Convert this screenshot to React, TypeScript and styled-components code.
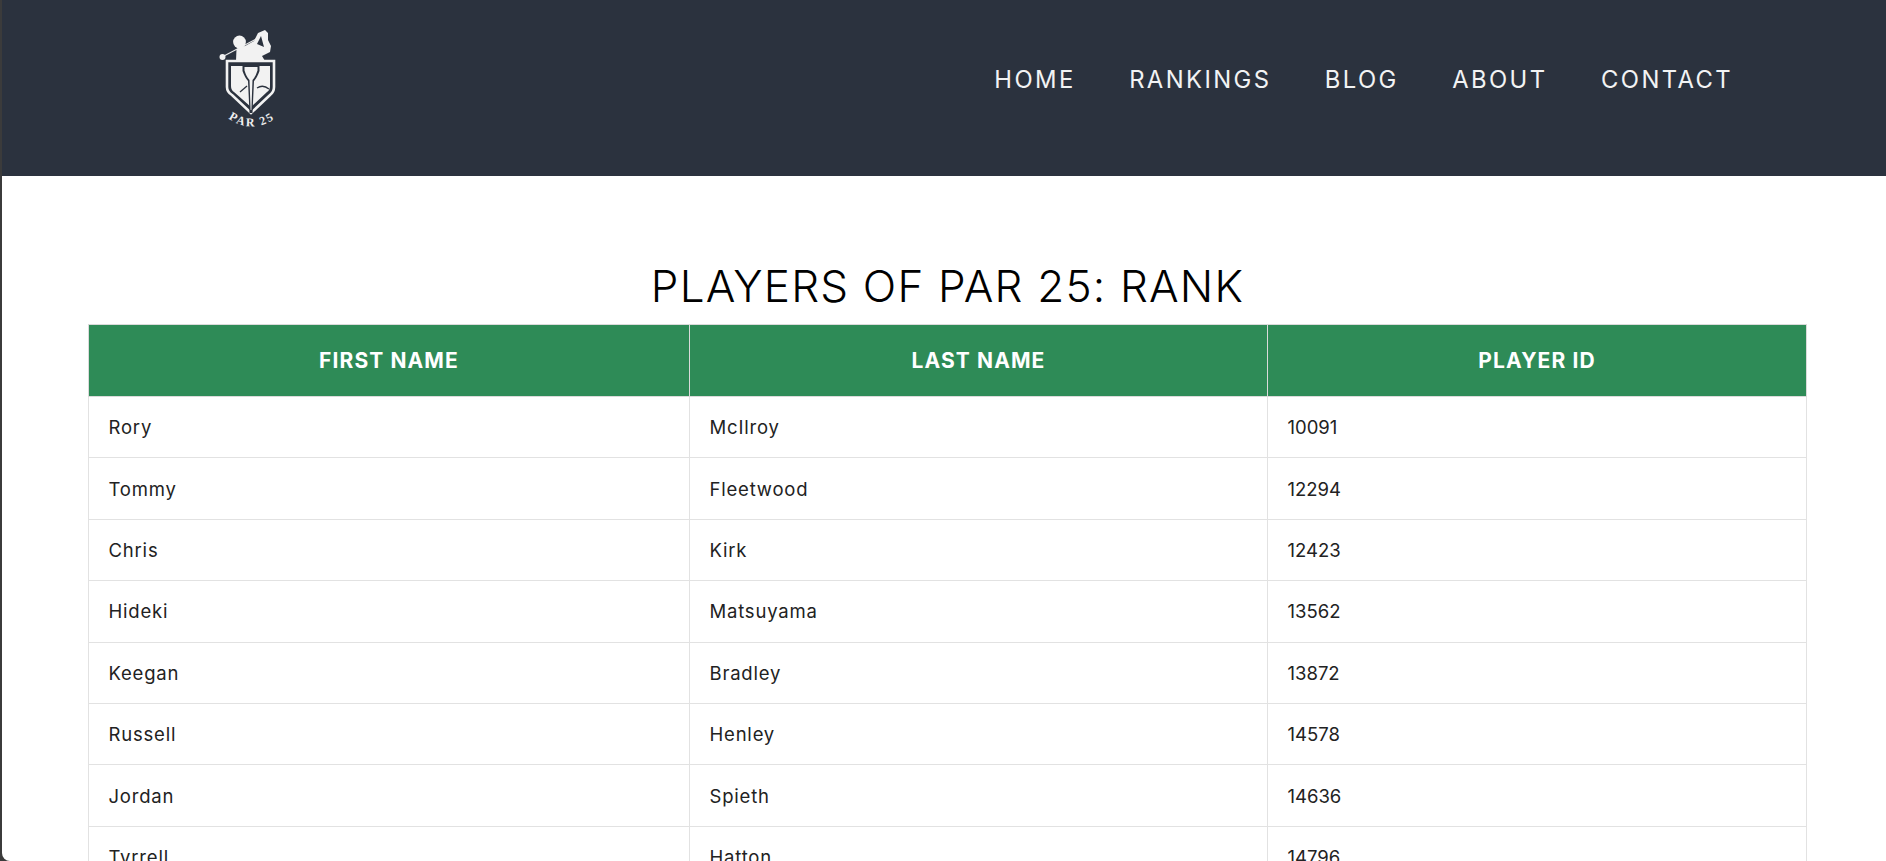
import { createGlobalStyle } from "styled-components";
import styled from "styled-components";

const fontStack = `Inter, "Open Sans", "Liberation Sans", sans-serif`;

const GlobalStyle = createGlobalStyle`
  html, body {
    margin: 0;
    height: 100%;
    overflow: hidden;
    background: #fff;
    font-family: ${fontStack};
  }
`;

const Frame = styled.div`
  height: 861px;
  overflow: hidden;
  background: #3b3b3b;
  padding-left: 2px;
`;

const Header = styled.header`
  height: 176px;
  padding: 28px 153px 0 213px;
  box-sizing: border-box;
  background: #2b323e;
  display: flex;
  justify-content: space-between;
  align-items: flex-start;
`;

const LogoMark = styled.svg`
  width: 70px;
  height: 102px;
  display: block;
`;

const Nav = styled.nav`
  display: flex;
  gap: 53.5px;
  padding-top: 36px;
`;

const NavLink = styled.a`
  font-size: 23.8px;
  line-height: 32px;
  letter-spacing: 2.4px;
  color: #f2f3f4;
  font-weight: 400;
`;

const Main = styled.main`
  height: 685px;
  background: #fff;
  border-bottom-left-radius: 8px;
  padding: 85px 79px 0 86px;
  box-sizing: border-box;
`;

const Title = styled.h1`
  margin: 0 0 13px;
  font-size: 44px;
  line-height: 50px;
  font-weight: 300;
  letter-spacing: 1.2px;
  color: #000;
  text-align: center;
`;

const Table = styled.table`
  width: 1718px;
  table-layout: fixed;
  border-collapse: collapse;
`;

const HeadCell = styled.th`
  height: 71px;
  padding: 0;
  background: #2e8b57;
  color: #fff;
  font-size: 21px;
  font-weight: 700;
  letter-spacing: 1.1px;
  text-align: center;
  border: 1px solid #dadada;
`;

const Cell = styled.td<{ $numeric?: boolean }>`
  height: 61.4px;
  padding: 0 19.5px;
  box-sizing: border-box;
  font-size: 18.5px;
  letter-spacing: ${({ $numeric }) => ($numeric ? "0" : "0.8px")};
  color: #222;
  border: 1px solid #e2e2e2;
`;

const Logo = () => (
  <LogoMark viewBox="215 28 70 102" aria-label="Par 25 logo">
    <defs>
      <path id="crest-arc" d="M225 116 Q252 137 279 116" />
    </defs>
    {/* club */}
    <line x1="222" y1="57" x2="258" y2="38" stroke="#e8e8e8" strokeWidth="1.2" />
    <circle cx="222.5" cy="57" r="3" fill="#f2f2f2" />
    {/* golfer */}
    <circle cx="239.5" cy="42" r="6.4" fill="#f2f2f2" />
    <path
      fillRule="evenodd"
      fill="#f2f2f2"
      d="M236 61 L236.5 49 L246 45.5 L254 41 L258 33 L265 30 L268 33 L268 40 L271 46 L270 52 L262 56 L265 61 Z M257 44 L261 36 L264 47 Z"
    />
    {/* shield */}
    <path
      d="M227 61 H274 V87 Q274 92 270 95 L251 113 L232 95 Q227 92 227 87 Z"
      fill="#2b323e"
      stroke="#f2f2f2"
      strokeWidth="2.6"
    />
    <path d="M231 66 H270 V86 Q270 90 267 92 L251 107 L234 92 Q231 90 231 86 Z" fill="#f2f2f2" />
    {/* tee */}
    <path
      d="M242.5 65 H259.5 V71 Q257 78 254 81 L252.5 113 H249.5 L248 81 Q245 78 242.5 71 Z"
      fill="#2b323e"
    />
    <path
      d="M244.5 67 H257.5 V70.5 Q255.5 77 252.5 80 L251.4 110 H250.6 L249.5 80 Q246.5 77 244.5 70.5 Z"
      fill="#f2f2f2"
    />
    <path d="M257 88 Q263 84 269 89" stroke="#2b323e" strokeWidth="1.3" fill="none" />
    <path d="M240 92 L247 86" stroke="#2b323e" strokeWidth="1.3" fill="none" />
    <text fontFamily='"Liberation Serif", serif' fontSize="12" fontWeight="700" fill="#eee" letterSpacing="2">
      <textPath href="#crest-arc" startOffset="50%" textAnchor="middle">
        PAR 25
      </textPath>
    </text>
  </LogoMark>
);

const links = ["HOME", "RANKINGS", "BLOG", "ABOUT", "CONTACT"];

const players = [
  ["Rory", "McIlroy", "10091"],
  ["Tommy", "Fleetwood", "12294"],
  ["Chris", "Kirk", "12423"],
  ["Hideki", "Matsuyama", "13562"],
  ["Keegan", "Bradley", "13872"],
  ["Russell", "Henley", "14578"],
  ["Jordan", "Spieth", "14636"],
  ["Tyrrell", "Hatton", "14796"],
];

export default function App() {
  return (
    <>
      <GlobalStyle />
      <Frame>
        <Header>
          <Logo />
          <Nav>
            {links.map((l) => (
              <NavLink key={l}>{l}</NavLink>
            ))}
          </Nav>
        </Header>
        <Main>
          <Title>PLAYERS OF PAR 25: RANK</Title>
          <Table>
            <colgroup>
              <col width="601" />
              <col width="578" />
              <col width="539" />
            </colgroup>
            <thead>
              <tr>
                <HeadCell>FIRST NAME</HeadCell>
                <HeadCell>LAST NAME</HeadCell>
                <HeadCell>PLAYER ID</HeadCell>
              </tr>
            </thead>
            <tbody>
              {players.map((p) => (
                <tr key={p[2]}>
                  <Cell>{p[0]}</Cell>
                  <Cell>{p[1]}</Cell>
                  <Cell $numeric>{p[2]}</Cell>
                </tr>
              ))}
            </tbody>
          </Table>
        </Main>
      </Frame>
    </>
  );
}
